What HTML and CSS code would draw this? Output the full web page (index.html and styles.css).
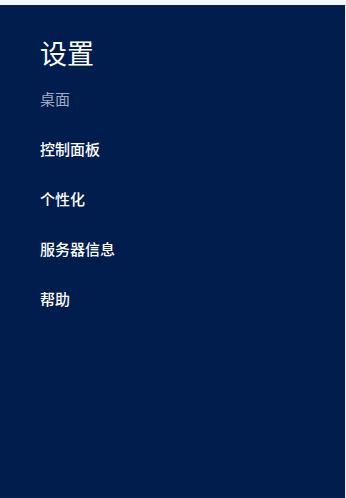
FILE: index.html
```html
<!DOCTYPE html>
<html lang="zh-CN">
<head>
<meta charset="utf-8">
<title>设置</title>
<link rel="stylesheet" href="styles.css">
</head>
<body>
<div class="page">
  <aside class="panel">
    <h1 class="title">设置</h1>
    <ul class="menu">
      <li class="item item-context">桌面</li>
      <li class="item">控制面板</li>
      <li class="item">个性化</li>
      <li class="item">服务器信息</li>
      <li class="item">帮助</li>
    </ul>
  </aside>
  <div class="edge"></div>
</div>
</body>
</html>
```
FILE: styles.css
```css
html, body {
  margin: 0;
  padding: 0;
  background: #f4f7fb;
}
.page {
  display: flex;
  width: 346px;
  height: 498px;
  padding-top: 5px;
  box-sizing: border-box;
}
.panel {
  width: 345px;
  height: 493px;
  background: #001d4d;
  padding: 30px 0 0 40px;
  box-sizing: border-box;
  font-family: "Noto Sans CJK SC", "Noto Sans", sans-serif;
  color: #ffffff;
}
.edge {
  width: 1px;
  background: #e8eef6;
}
.title {
  margin: 0 0 3px 0;
  font-size: 27px;
  line-height: 36px;
  font-weight: 400;
  letter-spacing: 0;
}
.menu {
  list-style: none;
  margin: 0;
  padding: 0;
}
.item {
  font-size: 15px;
  line-height: 50px;
  height: 50px;
  font-weight: 500;
}
.item-context {
  color: #a1abc1;
  font-weight: 400;
}
```
